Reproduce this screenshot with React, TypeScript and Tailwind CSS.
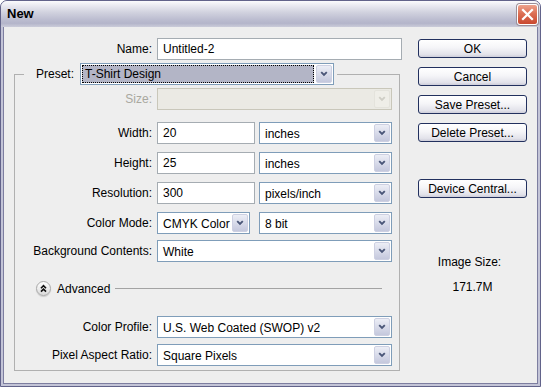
import type { ReactNode } from 'react'

const FONT = "font-['Liberation_Sans',Arial,sans-serif]"

function ComboArrow({ disabled }: { disabled?: boolean }) {
  return (
    <div
      className={`m-px flex w-[16px] shrink-0 items-center justify-center rounded-[2px] border ${
        disabled
          ? 'border-[#e4e3dc] bg-[#efeee8]'
          : 'border-[#cdd0e2] bg-[linear-gradient(to_bottom,#eceef6,#c4c8dd)]'
      }`}
    >
      <svg width="8" height="6" viewBox="0 0 8 6">
        <path
          d="M1.2 1.2 L4 4 L6.8 1.2"
          fill="none"
          stroke={disabled ? '#cfcec6' : '#4a5678'}
          strokeWidth="1.9"
        />
      </svg>
    </div>
  )
}

function Select({
  value,
  className,
  disabled,
  focused,
}: {
  value?: string
  className: string
  disabled?: boolean
  focused?: boolean
}) {
  return (
    <div
      className={`flex h-[22px] shrink-0 border ${
        disabled ? 'border-[#c9c7ba] bg-[#ebeae4]' : 'border-[#7f9db9] bg-white'
      } ${className}`}
    >
      <div className="flex min-w-0 flex-1 items-stretch p-px">
        {focused ? (
          <div className="flex flex-1 items-center border border-dotted border-black bg-[#b3b5c6] pl-[2px]">
            {value}
          </div>
        ) : (
          <div className="flex flex-1 items-center pl-[4px] pt-px">{value}</div>
        )}
      </div>
      <ComboArrow disabled={disabled} />
    </div>
  )
}

function Field({ value, className }: { value: string; className: string }) {
  return (
    <div className={`flex h-[22px] shrink-0 items-center border border-[#a5acb2] bg-white pl-[5px] ${className}`}>
      {value}
    </div>
  )
}

function Row({
  label,
  children,
  className = '',
  muted,
}: {
  label: string
  children: ReactNode
  className?: string
  muted?: boolean
}) {
  return (
    <div className={`flex items-center ${className}`}>
      <div className={`w-[142px] shrink-0 pr-[5px] text-right ${muted ? 'text-[#a9a89f]' : ''}`}>{label}</div>
      {children}
    </div>
  )
}

function XpButton({ label, className = '' }: { label: string; className?: string }) {
  return (
    <button
      type="button"
      className={`flex h-[19px] w-[109px] items-center justify-center rounded-[3px] border border-[#22305e] bg-[linear-gradient(to_bottom,#ffffff_0%,#f5f5f8_45%,#e2e2ea_85%,#cdcdd9_100%)] text-black ${className}`}
    >
      {label}
    </button>
  )
}

export default function App() {
  return (
    <div className={`${FONT} h-[387px] w-[541px] bg-white text-[12px] leading-[14px] text-black`}>
      <div className="flex h-full w-full flex-col overflow-hidden rounded-t-[7px] border border-[#62638a] bg-[#c3c4d7]">
        {/* caption */}
        <div className="flex h-[26px] shrink-0 items-center justify-between bg-[linear-gradient(to_bottom,#fbfbfd_0%,#e7e7ef_20%,#d0d1de_45%,#bdbed1_70%,#b4b5ca_86%,#cbccda_100%)] pl-[6px] pr-[2px]">
          <span className="text-[13px] font-bold text-black">New</span>
          <div className="flex h-[21px] w-[21px] items-center justify-center rounded-[3px] border border-white bg-[linear-gradient(to_bottom,#eda38c_0%,#dc6f54_45%,#c9482f_100%)] shadow-[0_0_0_1px_#9a8e96]">
            <svg width="13" height="13" viewBox="0 0 13 13">
              <path d="M2 2 L11 11 M11 2 L2 11" stroke="white" strokeWidth="2.2" strokeLinecap="square" />
            </svg>
          </div>
        </div>

        {/* dialog body */}
        <div className="flex min-h-0 flex-1 px-[2px] pb-[2px]">
          <div className="flex flex-1 border-x border-b border-[#7d7ea0] bg-[#eeeeee] pt-[11px]">
            {/* form column */}
            <div className="flex w-[396px] shrink-0 flex-col">
              <div className="flex items-center">
                <div className="w-[153px] shrink-0 pr-[5px] text-right">Name:</div>
                <Field value="Untitled-2" className="w-[245px]" />
              </div>

              <fieldset className="ml-[10px] mt-[3px] h-[308px] w-[386px] border border-[#b0b0b0] pb-[4px] pr-[7px]">
                <legend className="ml-[9px] pl-[12px] pr-[3px]">
                  <div className="flex items-center">
                    <span>Preset:</span>
                    <Select value="T-Shirt Design" className="ml-[6px] w-[254px]" focused />
                  </div>
                </legend>

                <Row label="Size:" muted className="mt-[3px]">
                  <Select className="w-[235px]" disabled />
                </Row>
                <Row label="Width:" className="mt-[12px]">
                  <Field value="20" className="w-[98px]" />
                  <Select value="inches" className="ml-[4px] w-[133px]" />
                </Row>
                <Row label="Height:" className="mt-[8px]">
                  <Field value="25" className="w-[98px]" />
                  <Select value="inches" className="ml-[4px] w-[133px]" />
                </Row>
                <Row label="Resolution:" className="mt-[8px]">
                  <Field value="300" className="w-[98px]" />
                  <Select value="pixels/inch" className="ml-[4px] w-[133px]" />
                </Row>
                <Row label="Color Mode:" className="mt-[8px]">
                  <Select value="CMYK Color" className="w-[93px]" />
                  <Select value="8 bit" className="ml-[9px] w-[133px]" />
                </Row>
                <Row label="Background Contents:" className="mt-[6px]">
                  <Select value="White" className="w-[235px]" />
                </Row>

                <div className="ml-[21px] mr-[10px] mt-[19px] flex h-[15px] items-center">
                  <div className="flex h-[15px] w-[15px] shrink-0 items-center justify-center rounded-full border border-[#a9a9a9] bg-[linear-gradient(to_bottom,#ffffff,#dadada)] shadow-[0_1px_1px_rgba(0,0,0,0.15)]">
                    <svg width="13" height="13" viewBox="0 0 13 13">
                      <path d="M4 6.2 L6.5 3.7 L9 6.2 M4 9.6 L6.5 7.1 L9 9.6" fill="none" stroke="#111" strokeWidth="1.6" />
                    </svg>
                  </div>
                  <span className="ml-[6px]">Advanced</span>
                  <div className="ml-[5px] h-px flex-1 bg-[#a3a3a3]" />
                </div>

                <Row label="Color Profile:" className="mt-[20px]">
                  <Select value="U.S. Web Coated (SWOP) v2" className="w-[235px]" />
                </Row>
                <Row label="Pixel Aspect Ratio:" className="mt-[6px]">
                  <Select value="Square Pixels" className="w-[235px]" />
                </Row>
              </fieldset>
            </div>

            {/* buttons column */}
            <div className="ml-[18px] flex w-[109px] shrink-0 flex-col pt-px">
              <XpButton label="OK" />
              <XpButton label="Cancel" className="mt-[9px]" />
              <XpButton label="Save Preset..." className="mt-[9px]" />
              <XpButton label="Delete Preset..." className="mt-[9px]" />
              <XpButton label="Device Central..." className="mt-[37px]" />
              <div className="mt-[57px] pr-[6px] text-center leading-[14px]">Image Size:</div>
              <div className="mt-[11px] text-center leading-[14px]">171.7M</div>
            </div>
          </div>
        </div>
      </div>
    </div>
  )
}
